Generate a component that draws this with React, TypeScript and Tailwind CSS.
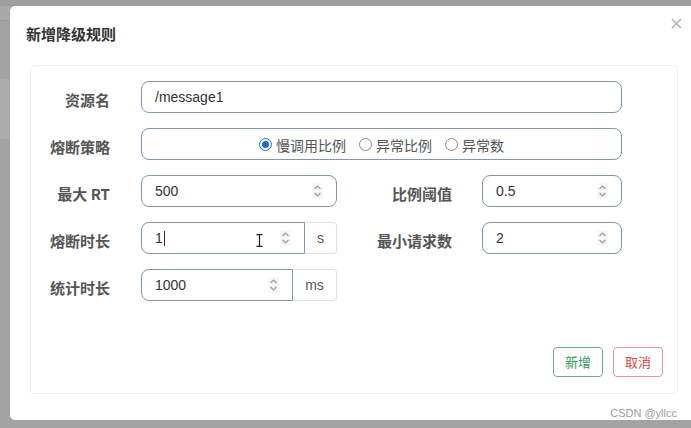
import React from "react";

const cjk = { fontFamily: '"Noto Sans CJK SC", "Liberation Sans", sans-serif' };
const latin = { fontFamily: '"Liberation Sans", "Noto Sans CJK SC", sans-serif' };

function Spinner() {
  return (
    <span className="flex h-[16px] w-[11px] items-center justify-center bg-[#f7f7f7]">
      <svg width="9" height="14" viewBox="0 0 9 14" fill="none" stroke="#9a9a9a" strokeWidth="1.1">
        <path d="M1.5 5 L4.5 2 L7.5 5" />
        <path d="M1.5 9 L4.5 12 L7.5 9" />
      </svg>
    </span>
  );
}

function Label({ text, w }: { text: string; w: string }) {
  return (
    <div className={`${w} shrink-0 pt-[6px] text-right text-[15px] font-bold leading-[20px] text-[#555]`} style={cjk}>
      {text}
    </div>
  );
}

function NumberInput({ value, w, addon, caret }: { value: string; w: string; addon?: boolean; caret?: boolean }) {
  return (
    <div
      className={`${w} flex h-[32px] shrink-0 items-center justify-between border border-[#7f96ae] bg-white pl-[13px] pr-[13px] ${
        addon ? "rounded-l-[8px]" : "rounded-[8px]"
      }`}
    >
      <span className="flex items-center text-[14px] text-[#333]" style={latin}>
        {value}
        {caret && <span className="ml-px inline-block h-[15px] w-px bg-[#333]" />}
      </span>
      <Spinner />
    </div>
  );
}

function Addon({ text, w }: { text: string; w: string }) {
  return (
    <div
      className={`${w} flex h-[32px] shrink-0 items-center justify-center rounded-r-[4px] border border-l-0 border-[#e2e2e2] text-[14px] text-[#555]`}
      style={latin}
    >
      {text}
    </div>
  );
}

function Radio({ label, checked }: { label: string; checked?: boolean }) {
  return (
    <label className="flex items-center gap-[4px]">
      <span
        className={`flex h-[13px] w-[13px] items-center justify-center rounded-full border ${
          checked ? "border-[#1f6fd1]" : "border-[#8a8a8a]"
        }`}
      >
        {checked && <span className="h-[7px] w-[7px] rounded-full bg-[#1f6fd1]" />}
      </span>
      <span className="pt-px text-[14px] leading-[18px] text-[#555]" style={cjk}>
        {label}
      </span>
    </label>
  );
}

export default function App() {
  return (
    <div className="h-[428px] w-[691px] overflow-hidden bg-[#a3a3a3]">
      <div className="h-[6px] bg-[#9e9e9e]" />
      <div className="flex">
        <div className="flex w-[10px] shrink-0 flex-col">
          <div className="h-[14px] bg-[#a9a9a9]" />
          <div className="h-px bg-[#999]" />
          <div className="h-[58px] bg-[#a3a3a3]" />
          <div className="h-[60px] bg-[#acacac]" />
          <div className="h-[280px] bg-[#a3a3a3]" />
        </div>

        <div className="flex h-[414px] w-[700px] shrink-0 flex-col rounded-l-[5px] bg-white">
          <div className="flex h-[59px] w-[672px] items-start justify-between pl-[16px]">
            <div className="mt-[18px] text-[15px] font-bold leading-[20px] text-[#333]" style={cjk}>
              新增降级规则
            </div>
            <svg className="mt-[12px]" width="11" height="11" viewBox="0 0 11 11" stroke="#b5b5b5" strokeWidth="1.6">
              <path d="M1 1 L10 10 M10 1 L1 10" />
            </svg>
          </div>

          <div className="ml-[20px] flex h-[329px] w-[648px] flex-col rounded-[4px] border border-[#efefef] pt-[15px]">
            <div className="flex flex-col gap-[15px]">
              <div className="flex items-center">
                <Label text="资源名" w="w-[79px]" />
                <div
                  className="ml-[31px] flex h-[32px] w-[481px] items-center rounded-[8px] border border-[#7f96ae] pl-[13px] text-[14px] text-[#333]"
                  style={latin}
                >
                  /message1
                </div>
              </div>

              <div className="flex items-center">
                <Label text="熔断策略" w="w-[79px]" />
                <div className="ml-[31px] flex h-[32px] w-[481px] items-center justify-center gap-[13px] rounded-[8px] border border-[#7f96ae]">
                  <Radio label="慢调用比例" checked />
                  <Radio label="异常比例" />
                  <Radio label="异常数" />
                </div>
              </div>

              <div className="flex items-center">
                <Label text="最大 RT" w="w-[79px]" />
                <div className="ml-[31px]">
                  <NumberInput value="500" w="w-[196px]" />
                </div>
                <Label text="比例阈值" w="w-[115px]" />
                <div className="ml-[30px]">
                  <NumberInput value="0.5" w="w-[140px]" />
                </div>
              </div>

              <div className="flex items-center">
                <Label text="熔断时长" w="w-[79px]" />
                <div className="relative ml-[31px] flex">
                  <NumberInput value="1" w="w-[164px]" addon caret />
                  <Addon text="s" w="w-[32px]" />
                  <svg
                    className="absolute left-[115px] top-[12px]"
                    width="7"
                    height="13"
                    viewBox="0 0 7 13"
                    fill="none"
                    stroke="#222"
                    strokeWidth="1.2"
                  >
                    <path d="M0.5 0.6 H6.5 M3.5 0.6 V12.4 M0.5 12.4 H6.5" />
                  </svg>
                </div>
                <Label text="最小请求数" w="w-[115px]" />
                <div className="ml-[30px]">
                  <NumberInput value="2" w="w-[140px]" />
                </div>
              </div>

              <div className="flex items-center">
                <Label text="统计时长" w="w-[79px]" />
                <div className="ml-[31px] flex">
                  <NumberInput value="1000" w="w-[152px]" addon />
                  <Addon text="ms" w="w-[44px]" />
                </div>
              </div>
            </div>

            <div className="mt-[46px] flex justify-end gap-[10px] pr-[14px]" style={cjk}>
              <button className="h-[30px] w-[50px] rounded-[4px] border border-[#6fae88] text-[13px] text-[#2f9a52]">
                新增
              </button>
              <button className="h-[30px] w-[50px] rounded-[4px] border border-[#e49595] text-[13px] text-[#d64545]">
                取消
              </button>
            </div>
          </div>

          <div className="mt-[12px] w-[667px] text-right text-[11px] leading-[14px] text-[#9a9a9a]" style={latin}>
            CSDN @yllcc
          </div>
        </div>
      </div>
    </div>
  );
}
